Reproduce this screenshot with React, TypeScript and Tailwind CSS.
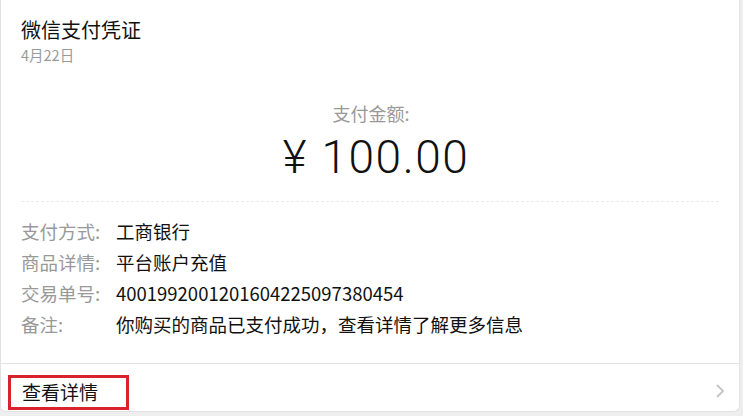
import React from "react";

const font = { fontFamily: '"Noto Sans CJK SC", "Noto Sans", sans-serif' };

export default function App() {
  const rows: [string, string][] = [
    ["支付方式:", "工商银行"],
    ["商品详情:", "平台账户充值"],
    ["交易单号:", "4001992001201604225097380454"],
    ["备注:", "你购买的商品已支付成功，查看详情了解更多信息"],
  ];
  return (
    <div className="w-[743px] h-[416px] bg-[#eeeeee] overflow-hidden" style={font}>
      <div className="w-[740px] h-[412px] bg-white border-x border-b border-[#e2e2e2] rounded-b-[6px] flex flex-col">
        <div className="px-[20px] pt-[16px]">
          <div className="text-[20px] leading-[28px] text-[#111]">微信支付凭证</div>
          <div className="text-[14.5px] leading-[20px] text-[#9a9a9a] mt-[1px]">4月22日</div>
        </div>
        <div className="flex flex-col items-center mt-[35px]">
          <div className="text-[18px] leading-[26px] text-[#999] pl-[2px]">支付金额:</div>
          <div
            className="text-[46px] leading-[52px] text-[#111] mt-[5px] flex items-baseline pl-[12px]"
            style={{ fontFamily: '"Roboto", "Liberation Sans", sans-serif', fontWeight: 300 }}
          >
            <span>¥</span>
            <span className="ml-[15px] tracking-[1.5px]">100.00</span>
          </div>
        </div>
        <div className="mx-[20px] mt-[18px] border-t border-dashed border-[#ececec]" />
        <div className="px-[20px] pt-[16px] flex flex-col gap-[5px]">
          {rows.map(([k, v]) => (
            <div key={k} className="flex text-[18.5px] leading-[26px]">
              <div className="w-[95px] text-[#999]">{k}</div>
              <div className="text-[#111]">{v}</div>
            </div>
          ))}
        </div>
        <div className="mt-auto border-t border-[#e4e4e4] h-[48px] flex items-end justify-between pl-[7px] pr-[14px]">
          <div className="border-[3px] border-[#d9222b] w-[121px] h-[35px] mb-[1px] flex items-center pl-[11px] text-[19px] text-[#111]">
            查看详情
          </div>
          <svg width="10" height="16" viewBox="0 0 10 16" className="mb-[12px]">
            <path d="M2 2 L8 8 L2 14" fill="none" stroke="#c4c4c4" strokeWidth="1.8" />
          </svg>
        </div>
      </div>
    </div>
  );
}
